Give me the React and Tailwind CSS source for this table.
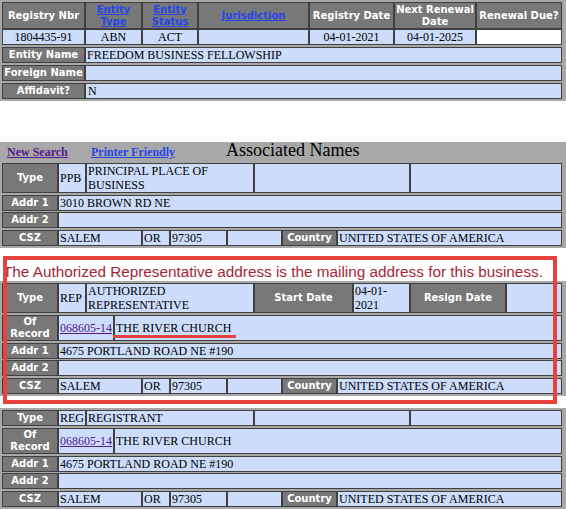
import React from 'react'

const serif = "font-['Liberation_Serif','Times_New_Roman',serif]"
const sans = "font-['DejaVu_Sans',Verdana,sans-serif]"

function L({ className = '', children }) {
  return (
    <div
      className={`flex shrink-0 items-center justify-center border border-[#404040] bg-[#787878] text-center ${sans} text-[10px] font-bold leading-[12px] text-white ${className}`}
    >
      <div>{children}</div>
    </div>
  )
}

function V({ className = '', children }) {
  return (
    <div
      className={`flex shrink-0 items-center border border-[#404040] bg-[#ccdcfa] px-px ${serif} text-[12px] leading-[14px] text-black ${className}`}
    >
      <div>{children}</div>
    </div>
  )
}

function HeadLink({ children }) {
  return <a className="cursor-pointer text-[#2546e8] underline">{children}</a>
}

function RecordLink({ children }) {
  return <a className="cursor-pointer text-[#551a8b] underline">{children}</a>
}

function Addresses({ street }) {
  return (
    <>
      <div className="mt-[2px] flex h-[16px]">
        <L className="w-[56px]">Addr 1</L>
        <V className="w-[504px]">{street}</V>
      </div>
      <div className="mt-px flex h-[16px]">
        <L className="w-[56px]">Addr 2</L>
        <V className="w-[504px]" />
      </div>
      <div className="mt-[2px] flex h-[16px]">
        <L className="w-[56px]">CSZ</L>
        <V className="w-[84px]">SALEM</V>
        <V className="w-[28px]">OR</V>
        <V className="w-[57px]">97305</V>
        <V className="w-[55px]" />
        <L className="w-[55px]">Country</L>
        <V className="w-[225px]">UNITED STATES OF AMERICA</V>
      </div>
    </>
  )
}

function OfRecord() {
  return (
    <div className="mt-[2px] flex h-[26px]">
      <L className="w-[56px]">
        Of
        <br />
        Record
      </L>
      <V className="w-[56px]">
        <RecordLink>068605-14</RecordLink>
      </V>
      <V className="w-[448px]">THE RIVER CHURCH</V>
    </div>
  )
}

export default function App() {
  return (
    <div className="relative h-[509px] w-[566px] overflow-hidden bg-white">
      {/* registry summary */}
      <div className="bg-[#a8a8a8] py-[2px] pl-[2px]">
        <div className="w-[560px]">
          <div className="flex h-[27px]">
            <L className="w-[83px]">Registry Nbr</L>
            <L className="w-[57px]">
              <HeadLink>
                Entity
                <br />
                Type
              </HeadLink>
            </L>
            <L className="w-[56px]">
              <HeadLink>
                Entity
                <br />
                Status
              </HeadLink>
            </L>
            <L className="w-[111px]">
              <HeadLink>Jurisdiction</HeadLink>
            </L>
            <L className="w-[85px]">Registry Date</L>
            <L className="w-[82px]">
              Next Renewal
              <br />
              Date
            </L>
            <L className="w-[86px]">Renewal Due?</L>
          </div>
          <div className="flex h-[16px]">
            <V className="w-[83px] justify-center">1804435-91</V>
            <V className="w-[57px] justify-center">ABN</V>
            <V className="w-[56px] justify-center">ACT</V>
            <V className="w-[111px] justify-center" />
            <V className="w-[85px] justify-center">04-01-2021</V>
            <V className="w-[82px] justify-center">04-01-2025</V>
            <V className="w-[86px] !bg-white" />
          </div>
          <div className="mt-[2px] flex h-[16px]">
            <L className="w-[83px]">Entity Name</L>
            <V className="w-[477px]">FREEDOM BUSINESS FELLOWSHIP</V>
          </div>
          <div className="mt-[2px] flex h-[16px]">
            <L className="w-[83px]">Foreign Name</L>
            <V className="w-[477px]" />
          </div>
          <div className="mt-[2px] flex h-[16px]">
            <L className="w-[83px]">Affidavit?</L>
            <V className="w-[477px] pl-[2px]">N</V>
          </div>
        </div>
      </div>

      {/* associated names */}
      <div className="mt-[41px] bg-[#a8a8a8] pb-[2px] pl-[2px]">
        <div className={`flex h-[21px] items-baseline ${serif}`}>
          <span className="w-[84px] shrink-0 pl-[5px] text-[12px] font-bold leading-[16px]">
            <a className="cursor-pointer text-[#551a8b] underline">New Search</a>
          </span>
          <span className="w-[138px] shrink-0 pl-[5px] text-[12px] font-bold leading-[16px]">
            <a className="cursor-pointer text-[#2546e8] underline">Printer Friendly</a>
          </span>
          <span className="pl-[2px] text-[18px] leading-[16px] text-black">Associated Names</span>
        </div>
        <div className="w-[560px]">
          <div className="flex h-[30px]">
            <L className="w-[56px]">Type</L>
            <V className="w-[28px]">PPB</V>
            <V className="w-[168px]">PRINCIPAL PLACE OF BUSINESS</V>
            <V className="w-[156px]" />
            <V className="w-[152px]" />
          </div>
          <Addresses street="3010 BROWN RD NE" />
        </div>
      </div>

      <p className="mt-[15px] pl-[3px] font-['Liberation_Sans',Arial,sans-serif] text-[15.3px] leading-[18px] text-[#a3263a]">
        The Authorized Representative address is the mailing address for this business.
      </p>

      <div className="bg-[#a8a8a8] py-[2px] pl-[2px]">
        <div className="w-[560px]">
          <div className="flex h-[30px]">
            <L className="w-[56px]">Type</L>
            <V className="w-[28px]">REP</V>
            <V className="w-[168px]">AUTHORIZED REPRESENTATIVE</V>
            <L className="w-[99px]">Start Date</L>
            <V className="w-[57px]">04-01-2021</V>
            <L className="w-[96px]">Resign Date</L>
            <V className="w-[56px]" />
          </div>
          <OfRecord />
          <Addresses street="4675 PORTLAND ROAD NE #190" />
        </div>
      </div>

      <div className="mt-[12px] bg-[#a8a8a8] py-[2px] pl-[2px]">
        <div className="w-[560px]">
          <div className="flex h-[16px]">
            <L className="w-[56px]">Type</L>
            <V className="w-[28px]">REG</V>
            <V className="w-[168px]">REGISTRANT</V>
            <V className="w-[156px]" />
            <V className="w-[152px]" />
          </div>
          <OfRecord />
          <Addresses street="4675 PORTLAND ROAD NE #190" />
        </div>
      </div>

      {/* annotation */}
      <div className="pointer-events-none absolute left-[3px] top-[256px] h-[148px] w-[554px] border-4 border-[#e5433b]" />
      <div className="pointer-events-none absolute left-[113px] top-[335px] h-[3px] w-[123px] bg-[#e5433b]" />
    </div>
  )
}
